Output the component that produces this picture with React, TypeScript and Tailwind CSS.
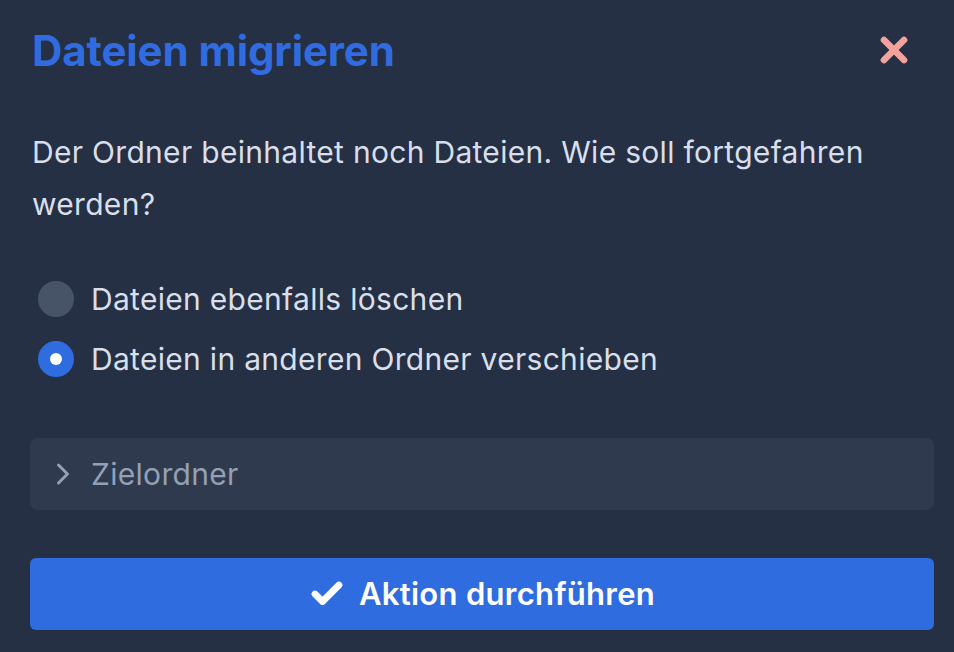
import { Check, ChevronRight, X } from 'lucide-react';
import { useState } from 'react';

const OPTIONS = [
  { id: 'delete', label: 'Dateien ebenfalls löschen' },
  { id: 'move', label: 'Dateien in anderen Ordner verschieben' },
];

export default function App() {
  const [choice, setChoice] = useState('move');

  return (
    <div className="h-[652px] w-[954px] bg-[#253045] pl-[30px] pr-[20px] font-['Inter',sans-serif]">
      <div className="flex h-[100px] items-center justify-between">
        <h1 className="pl-[2px] text-[42px] font-bold tracking-[-0.1px] text-[#306ce0]">Dateien migrieren</h1>
        <button className="mr-[20px] text-[#f4a29c]" aria-label="Schließen">
          <X size={40} strokeWidth={4} />
        </button>
      </div>

      <p className="mt-[26px] pl-[2px] pr-[60px] text-[30px] leading-[52px] tracking-[0.3px] text-[#d9dfea]">
        Der Ordner beinhaltet noch Dateien. Wie soll fortgefahren werden?
      </p>

      <div className="mt-[51px] flex flex-col gap-[24px] pl-[8px]">
        {OPTIONS.map((opt) => {
          const active = choice === opt.id;
          return (
            <label key={opt.id} className="flex h-[36px] cursor-pointer items-center gap-[17px]" onClick={() => setChoice(opt.id)}>
              <span
                className={`flex h-[36px] w-[36px] shrink-0 items-center justify-center rounded-full ${
                  active ? 'bg-[#2f6ce0]' : 'bg-[#475468]'
                }`}
              >
                {active && <span className="h-[12px] w-[12px] rounded-full bg-white" />}
              </span>
              <span className="text-[30px] tracking-[0.3px] text-[#d9dfea]">{opt.label}</span>
            </label>
          );
        })}
      </div>

      <div className="mt-[61px] flex h-[72px] items-center gap-[10px] rounded-[8px] bg-[#2f3a4e] pl-[15px]">
        <ChevronRight size={36} strokeWidth={2} className="text-[#94a0b4]" />
        <span className="text-[30px] tracking-[0.3px] text-[#94a0b4]">Zielordner</span>
      </div>

      <button className="mt-[48px] flex h-[72px] w-full items-center justify-center gap-[14px] rounded-[6px] bg-[#2f6ce0] text-[31px] font-semibold tracking-[0.3px] text-white">
        <Check size={36} strokeWidth={4.5} />
        Aktion durchführen
      </button>
    </div>
  );
}
